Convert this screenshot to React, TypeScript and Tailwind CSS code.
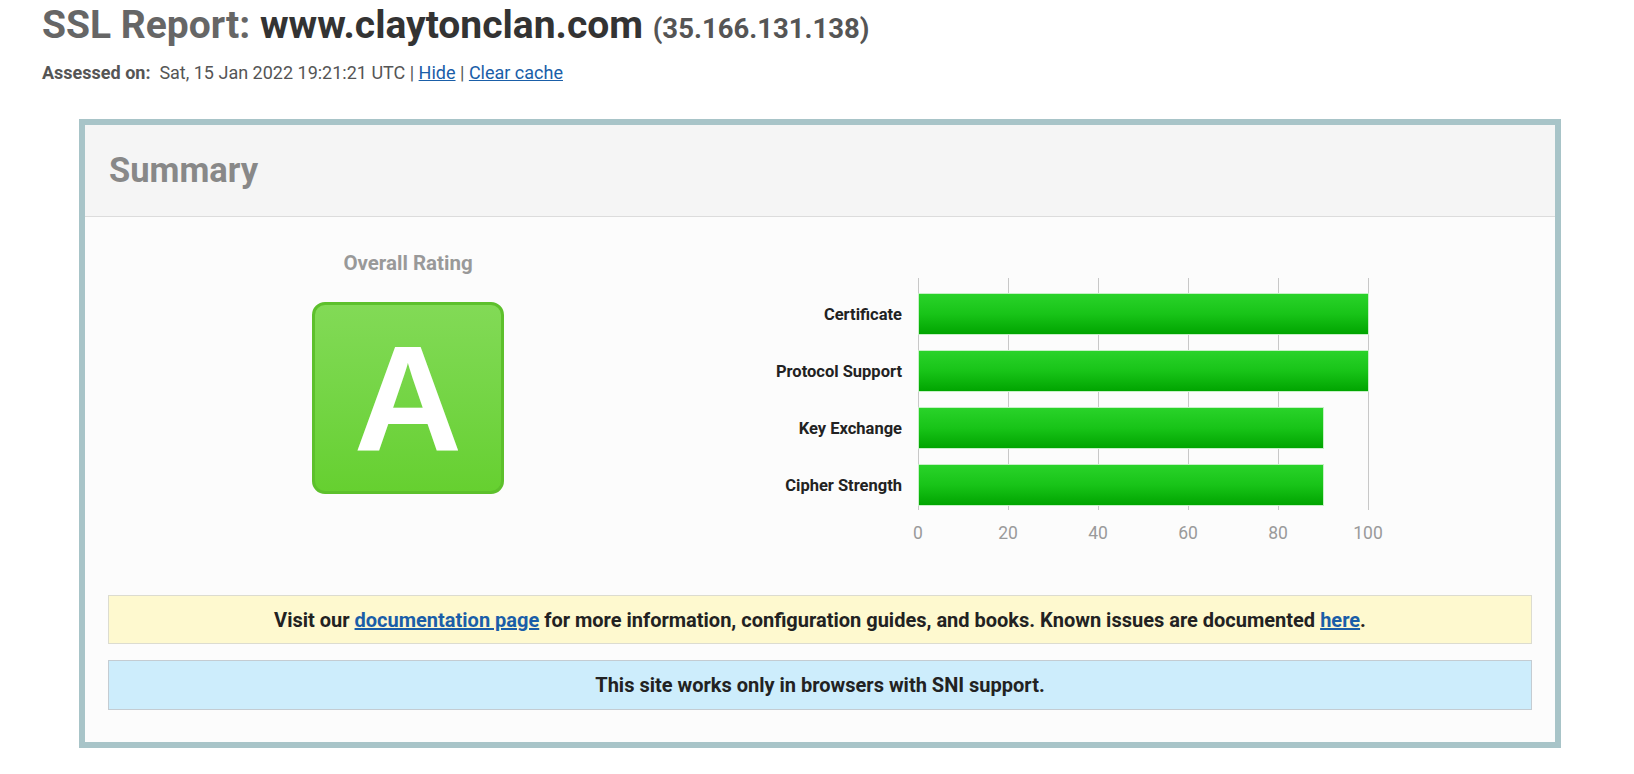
import React from "react";

const bars = [
  { label: "Certificate", value: 100 },
  { label: "Protocol Support", value: 100 },
  { label: "Key Exchange", value: 90 },
  { label: "Cipher Strength", value: 90 },
];

// Horizontal bar chart for the four sub-scores
function ScoreChart() {
  const x0 = 210;
  const unit = 4.5;
  const ticks = [0, 20, 40, 60, 80, 100];
  return (
    <svg width="700" height="270" viewBox="0 0 700 270">
      <defs>
        <linearGradient id="barFill" x1="0" y1="0" x2="0" y2="1">
          <stop offset="0" stopColor="#2ad32a" />
          <stop offset="0.5" stopColor="#18c418" />
          <stop offset="1" stopColor="#00a400" />
        </linearGradient>
      </defs>
      {ticks.map((t) => (
        <line
          key={t}
          x1={x0 + t * unit + 0.5}
          x2={x0 + t * unit + 0.5}
          y1="0"
          y2="232"
          stroke="#c8c8c8"
          strokeWidth="1"
        />
      ))}
      {bars.map((b, i) => {
        const y = 15 + i * 57;
        return (
          <g key={b.label}>
            <text
              x="194"
              y={y + 27}
              textAnchor="end"
              fontFamily="Roboto, sans-serif"
              fontWeight="700"
              fontSize="16.5"
              fill="#222"
            >
              {b.label}
            </text>
            <rect
              x={x0 + 0.5}
              y={y + 0.5}
              width={b.value * unit}
              height="41"
              fill="url(#barFill)"
              stroke="#c6f0c6"
              strokeWidth="1"
            />
          </g>
        );
      })}
      {ticks.map((t) => (
        <text
          key={t}
          x={x0 + t * unit}
          y="261"
          textAnchor="middle"
          fontFamily="Roboto, sans-serif"
          fontSize="17.5"
          fill="#9a9a9a"
        >
          {t}
        </text>
      ))}
    </svg>
  );
}

export default function App() {
  return (
    <div
      className="min-h-screen bg-white px-[42px] pt-[2px]"
      style={{ fontFamily: "Roboto, 'Liberation Sans', sans-serif" }}
    >
      {/* Title */}
      <h1 className="text-[39px] leading-[46px] font-bold whitespace-nowrap">
        <span className="text-[#666]">SSL Report: </span>
        <span className="text-[#333]">www.claytonclan.com</span>{" "}
        <span className="text-[27.5px] text-[#555]">(35.166.131.138)</span>
      </h1>
      <div className="mt-[10px] text-[18px] leading-[22px] text-[#555] whitespace-nowrap">
        <span className="font-bold">Assessed on:</span>&nbsp; Sat, 15 Jan 2022
        19:21:21 UTC |{" "}
        <a className="text-[#1a5ea8] underline" href="#">
          Hide
        </a>{" "}
        |{" "}
        <a className="text-[#1a5ea8] underline" href="#">
          Clear cache
        </a>
      </div>

      {/* Summary box */}
      <div className="mt-[35px] ml-[37px] w-[1482px] border-[6px] border-[#a8c4c8]">
        <div className="h-[92px] bg-[#f5f5f5] border-b border-[#dcdcdc] flex items-center px-[24px]">
          <h2 className="text-[34.5px] font-bold text-[#888]">Summary</h2>
        </div>
        <div className="bg-[#fcfcfc] px-[23px] pb-[32px]">
          <div className="flex">
            <div className="w-[600px] flex flex-col items-center pt-[35px]">
              <div className="text-[20.5px] leading-[22px] font-bold text-[#999]">
                Overall Rating
              </div>
              <div className="mt-[28px] w-[192px] h-[192px] rounded-[13px] border-[3px] border-[#5dc02c] bg-gradient-to-b from-[#82da56] to-[#66d030] flex items-center justify-center">
                <span
                  className="text-[150px] leading-none font-bold text-white"
                  style={{ fontFamily: "'Liberation Sans', Arial, sans-serif" }}
                >
                  A
                </span>
              </div>
            </div>
            <div className="pt-[61px]">
              <ScoreChart />
            </div>
          </div>

          <div className="mt-[47px] h-[49px] bg-[#fef9cf] border border-[#dcdcd0] flex items-center justify-center text-[20px] font-bold text-[#222]">
            <span>
              Visit our{" "}
              <a className="text-[#1a5ea8] underline" href="#">
                documentation page
              </a>{" "}
              for more information, configuration guides, and books. Known
              issues are documented{" "}
              <a className="text-[#1a5ea8] underline" href="#">
                here
              </a>
              .
            </span>
          </div>
          <div className="mt-[16px] h-[50px] bg-[#cdedfc] border border-[#c4ccd2] flex items-center justify-center text-[20px] font-bold text-[#222]">
            This site works only in browsers with SNI support.
          </div>
        </div>
      </div>
    </div>
  );
}
